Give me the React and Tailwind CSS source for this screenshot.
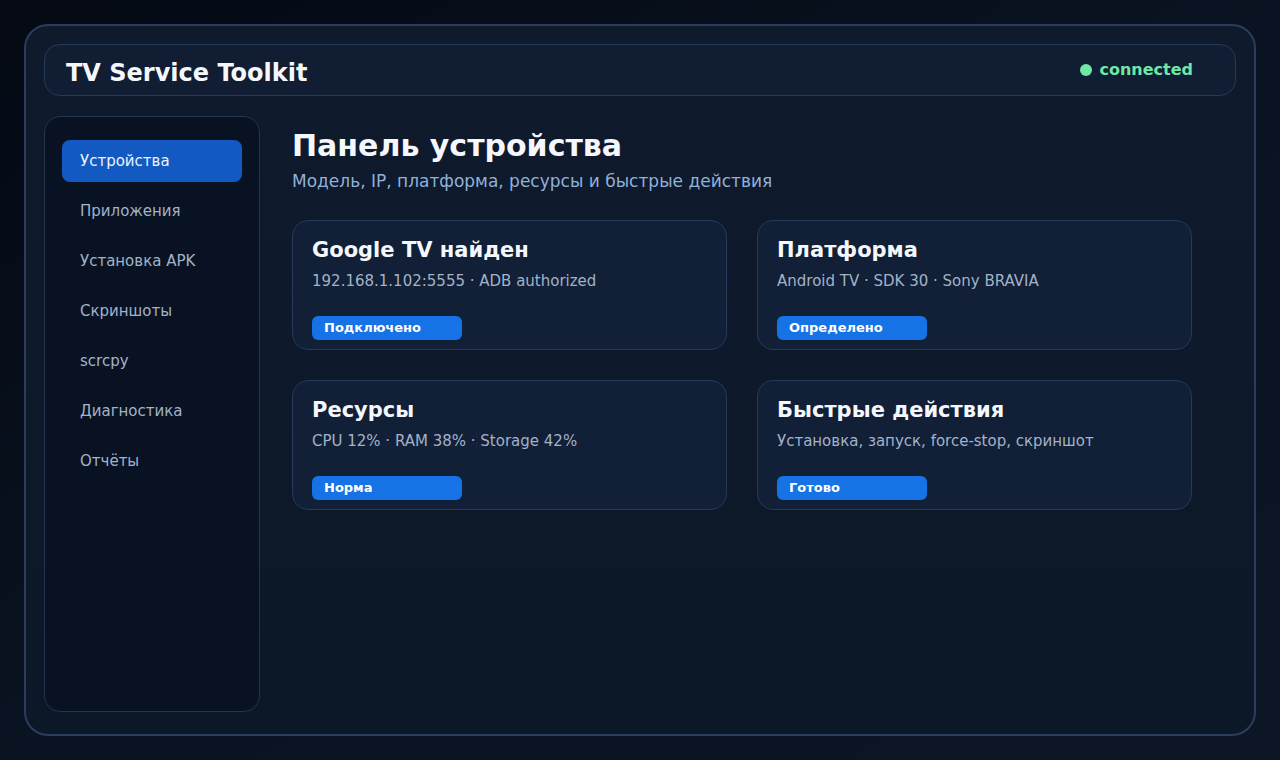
import React from "react";

const navItems = [
  "Устройства",
  "Приложения",
  "Установка APK",
  "Скриншоты",
  "scrcpy",
  "Диагностика",
  "Отчёты",
];

const cards = [
  { title: "Google TV найден", text: "192.168.1.102:5555 · ADB authorized", badge: "Подключено" },
  { title: "Платформа", text: "Android TV · SDK 30 · Sony BRAVIA", badge: "Определено" },
  { title: "Ресурсы", text: "CPU 12% · RAM 38% · Storage 42%", badge: "Норма" },
  { title: "Быстрые действия", text: "Установка, запуск, force-stop, скриншот", badge: "Готово" },
];

function InfoCard({ title, text, badge }) {
  return (
    <div className="h-[130px] rounded-[16px] border border-[#26395a] bg-[#111f37] px-[19px] pt-[15px]">
      <div className="text-[21px] font-bold leading-[28px] text-[#f4f7fb]">{title}</div>
      <div className="mt-[7px] text-[15px] leading-[20px] text-[#a3b2c7]">{text}</div>
      <div className="mt-[25px] flex h-[24px] w-[150px] items-center rounded-[6px] bg-[#1573e6] px-[12px] text-[13px] font-bold text-white">
        {badge}
      </div>
    </div>
  );
}

export default function App() {
  return (
    <div
      className="min-h-[760px] w-full bg-gradient-to-br from-[#040913] via-[#0a1321] to-[#0c1625] p-[24px]"
      style={{ fontFamily: '"DejaVu Sans", "Noto Sans", sans-serif' }}
    >
      <div className="h-[712px] rounded-[24px] border-2 border-[#2a3d5c] bg-gradient-to-b from-[#0f1a2d] to-[#0c1727] p-[18px]">
        {/* header */}
        <div className="flex h-[52px] items-center justify-between rounded-[16px] border border-[#273a58] bg-[#101d32] pl-[21px] pr-[42px]">
          <div className="pt-[5px] text-[24px] font-bold leading-[30px] text-[#f4f7fb]">TV Service Toolkit</div>
          <div className="flex items-center gap-[7px] text-[16px] font-bold text-[#6ee7a7]">
            <span className="h-[12px] w-[12px] rounded-full bg-[#6ee7a7]" />
            connected
          </div>
        </div>

        <div className="mt-[20px] flex gap-[32px]">
          {/* sidebar */}
          <div className="flex h-[596px] w-[216px] flex-col gap-[8px] rounded-[16px] border border-[#24354f] bg-[#081223] px-[17px] pt-[23px]">
            {navItems.map((item, i) => (
              <div
                key={item}
                className={[
                  "flex h-[42px] items-center rounded-[8px] px-[18px] text-[15px]",
                  i === 0 ? "bg-[#1259c2] text-[#eef3fb]" : "text-[#a3b2c7]",
                ].join(" ")}
              >
                {item}
              </div>
            ))}
          </div>

          {/* main */}
          <div className="pt-[12px]">
            <div className="text-[30px] font-bold leading-[36px] text-[#f4f7fb]">Панель устройства</div>
            <div className="mt-[6px] text-[17px] leading-[22px] text-[#8fb1da]">
              Модель, IP, платформа, ресурсы и быстрые действия
            </div>
            <div className="mt-[28px] grid grid-cols-[435px_435px] gap-[30px]">
              {cards.map((c) => (
                <InfoCard key={c.title} {...c} />
              ))}
            </div>
          </div>
        </div>
      </div>
    </div>
  );
}
